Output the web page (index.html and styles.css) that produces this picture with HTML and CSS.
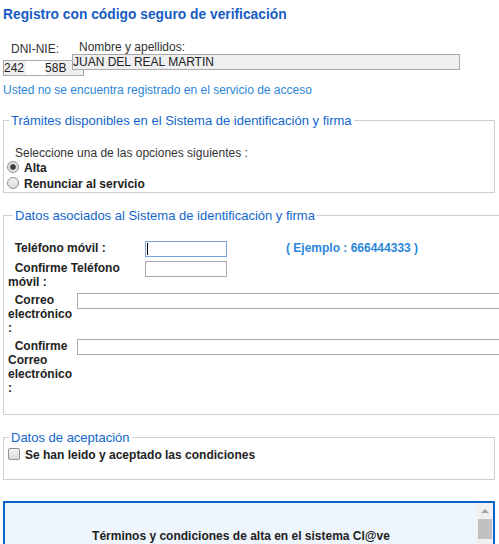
FILE: index.html
```html
<!DOCTYPE html>
<html lang="es">
<head>
<meta charset="utf-8">
<title>Registro con código seguro de verificación</title>
<link rel="stylesheet" href="styles.css">
</head>
<body>
<h1 class="title">Registro con código seguro de verificación</h1>

<div class="ident">
  <div class="ident-col ident-dni">
    <div class="ident-label">DNI-NIE:</div>
    <div class="box box-dni"><span>242</span><span class="redact"></span><span>58B</span></div>
  </div>
  <div class="ident-col ident-name">
    <div class="ident-label">Nombre y apellidos:</div>
    <div class="box box-name">JUAN DEL REAL MARTIN</div>
  </div>
</div>

<p class="notice">Usted no se encuentra registrado en el servicio de acceso</p>

<fieldset class="group group-tramites">
  <legend>Trámites disponibles en el Sistema de identificación y firma</legend>
  <p class="prompt">Seleccione una de las opciones siguientes :</p>
  <label class="option"><input class="radio" type="radio" name="op" checked><span>Alta</span></label>
  <label class="option"><input class="radio" type="radio" name="op"><span>Renunciar al servicio</span></label>
</fieldset>

<fieldset class="group group-datos">
  <legend>Datos asociados al Sistema de identificación y firma</legend>
  <div class="form-rows">
    <div class="form-row">
      <span class="form-label form-label-wide">&nbsp;&nbsp;Teléfono móvil :</span>
      <span class="caret-wrap"><input class="field field-short field-focus" type="text"></span>
      <span class="example">( Ejemplo : 666444333 )</span>
    </div>
    <div class="form-row">
      <span class="form-label form-label-wide">&nbsp;&nbsp;Confirme Teléfono móvil :</span>
      <input class="field field-short" type="text">
    </div>
    <div class="form-row">
      <span class="form-label form-label-narrow">&nbsp;&nbsp;Correo electrónico :</span>
      <input class="field field-long" type="text">
    </div>
    <div class="form-row">
      <span class="form-label form-label-narrow">&nbsp;&nbsp;Confirme Correo electrónico :</span>
      <input class="field field-long" type="text">
    </div>
  </div>
</fieldset>

<fieldset class="group group-acepta">
  <legend>Datos de aceptación</legend>
  <label class="option option-check"><input class="check" type="checkbox"><span>Se han leido y aceptado las condiciones</span></label>
</fieldset>

<div class="terms">
  <div class="terms-body">
    <p class="terms-title">Términos y condiciones de alta en el sistema Cl@ve</p>
  </div>
  <div class="scrollbar">
    <div class="scroll-up"></div>
    <div class="scroll-thumb"></div>
  </div>
</div>
</body>
</html>
```

FILE: styles.css
```css
html, body {
  overflow: hidden;
}
body {
  margin: 0;
  padding: 7px 4px 0 3px;
  font-family: "Liberation Sans", Arial, sans-serif;
  font-size: 12px;
  line-height: 14px;
  color: #333;
  background: #fff;
}

.title {
  margin: 0;
  font-size: 13.8px;
  line-height: 16px;
  font-weight: bold;
  color: #175cc4;
}

.ident {
  display: flex;
  align-items: flex-start;
  margin-top: 17px;
}
.ident-label {
  line-height: 14px;
  color: #333;
}
.ident-dni {
  padding-top: 2px;
}
.ident-dni .ident-label {
  padding-left: 8px;
  margin-bottom: 4px;
}
.ident-name {
  margin-left: -12px;
}
.ident-name .ident-label {
  padding-left: 7px;
}
.box {
  box-sizing: border-box;
  height: 16px;
  border: 1px solid #a9a9a9;
  background: #efefef;
  color: #222;
  line-height: 14px;
  white-space: nowrap;
  display: flex;
}
.box-dni {
  width: 81px;
}
.box-dni .redact {
  width: 21px;
  background: #fff;
  margin: 0 0 0 2px;
  height: 14px;
}
.box-dni .redact + span {
  margin-left: -2px;
}
.box-name {
  width: 388px;
}

.notice {
  margin: 7px 0 0 0;
  color: #2b86d6;
}

.group {
  margin: 15px 0 0 0;
  padding: 0;
  border: 1px solid #cfcfcf;
  min-width: 0;
}
.group legend {
  margin-left: 5px;
  padding: 0 2px;
  font-size: 13px;
  line-height: 15px;
  color: #1266cc;
}
.group-tramites {
  margin-top: 15.5px;
  padding: 18px 0 0 0;
}
.prompt {
  margin: 0;
  padding-left: 11px;
  color: #333;
}
.option {
  display: flex;
  align-items: flex-start;
  height: 16px;
  line-height: 16px;
  font-weight: bold;
  color: #222;
  padding-left: 3px;
}
.option span {
  margin-left: 5px;
}

.radio {
  appearance: none;
  -webkit-appearance: none;
  box-sizing: border-box;
  width: 12px;
  height: 12px;
  margin: 1px 0 0 0;
  border: 1px solid #8f8f8f;
  border-radius: 50%;
  background: linear-gradient(#f2f2f2, #dcdcdc);
}
.radio:checked {
  background: radial-gradient(circle, #3d3d3d 0 2.2px, #8a8a8a 2.8px, #e6e6e6 3.6px, #dcdcdc 100%);
}

.group-datos {
  padding: 18px 0 19px 4px;
  min-width: min-content;
}
.form-rows {
  display: flex;
  flex-direction: column;
  gap: 4px;
}
.form-row {
  display: flex;
  align-items: flex-start;
}
.form-label {
  font-weight: bold;
  color: #222;
  line-height: 14px;
}
.form-label-wide {
  width: 133px;
  margin-right: 4px;
}
.form-label-narrow {
  width: 66px;
  margin-right: 3px;
}
.field {
  box-sizing: border-box;
  height: 16px;
  margin: 0;
  padding: 0 2px;
  border: 1px solid #a9a9a9;
  background: #fff;
  font: inherit;
  outline: none;
}
.field-short {
  width: 82px;
}
.field-long {
  width: 440px;
}
.field-focus {
  border-color: #7aa5dc;
}
.caret-wrap {
  position: relative;
  display: block;
  height: 16px;
}
.caret-wrap::after {
  content: "";
  position: absolute;
  left: 2px;
  top: 2px;
  width: 1px;
  height: 12px;
  background: #000;
}
.example {
  margin-left: 59px;
  font-weight: bold;
  color: #2c87d8;
  line-height: 14px;
}

.group-acepta {
  padding: 2px 0 16px 0;
}
.option-check {
  padding-left: 3px;
}
.check {
  appearance: none;
  -webkit-appearance: none;
  box-sizing: border-box;
  width: 12px;
  height: 12px;
  margin: 1px 0 0 1px;
  border: 1px solid #8f8f8f;
  border-radius: 2px;
  background: linear-gradient(#f4f4f4, #dadada);
}
.option-check span {
  margin-left: 5px;
}

.terms {
  display: flex;
  margin-top: 21px;
  height: 140px;
  border: 2px solid #0a64c8;
  background: #eef5fd;
}
.terms-body {
  flex: 1;
  padding-top: 26px;
}
.terms-title {
  margin: 0;
  text-align: center;
  font-weight: bold;
  color: #222;
}
.scrollbar {
  width: 16px;
  background: #f0f0f0;
  display: flex;
  flex-direction: column;
  align-items: center;
}
.scroll-up {
  height: 16px;
  width: 16px;
  position: relative;
}
.scroll-up::after {
  content: "";
  position: absolute;
  left: 4px;
  top: 6px;
  border-left: 4px solid transparent;
  border-right: 4px solid transparent;
  border-bottom: 4px solid #a3a3a3;
}
.scroll-thumb {
  width: 14px;
  height: 20px;
  background: #c1c1c1;
}
```
